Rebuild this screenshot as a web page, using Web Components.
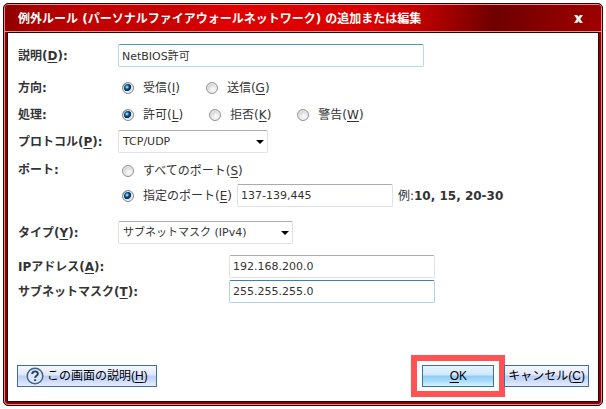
<!DOCTYPE html>
<html lang="ja">
<head>
<meta charset="utf-8">
<title>例外ルール</title>
<style>
  html, body { margin: 0; }
  body {
    box-sizing: border-box; min-height: 100vh; padding: 3px; display: flex; background: #fff; color: #333;
    font: 12px/18px "DejaVu Sans", "Noto Sans CJK JP", sans-serif;
    --field-font: 11px/15px "DejaVu Sans", "Noto Sans CJK JP", sans-serif;
  }
  dialog-window { flex: 1; }
</style>
</head>
<body>
<dialog-window heading="例外ルール (パーソナルファイアウォールネットワーク) の追加または編集">
  <text-field label="説明" key="D" value="NetBIOS許可" size="wide" tone="hover"></text-field>
  <radio-group class="first" label="方向" options="受信:I,送信:G"></radio-group>
  <radio-group label="処理" options="許可:L,拒否:K,警告:W"></radio-group>
  <select-field label="プロトコル" key="P" value="TCP/UDP" size="short"></select-field>
  <port-group label="ポート"></port-group>
  <select-field class="type" label="タイプ" key="Y" value="サブネットマスク (IPv4)"></select-field>
  <text-field class="address" label="IPアドレス" key="A" value="192.168.200.0" size="address"></text-field>
  <text-field class="mask" label="サブネットマスク" key="T" value="255.255.255.0" size="address" tone="focus"></text-field>
  <action-button slot="help" label="この画面の説明" key="H" icon></action-button>
  <action-button slot="actions" label="" key="O" tail="K" primary></action-button>
  <action-button slot="actions" label="キャンセル" key="C"></action-button>
</dialog-window>
<script>
const base = `
  * { box-sizing: border-box; }
  :host { display: block; }
  .row { display: flex; align-items: center; min-height: 23px; }
  .caption { flex: none; width: 100px; font-weight: bold; white-space: nowrap; }
  u { text-underline-offset: 2px; text-decoration-thickness: 1px; text-decoration-skip-ink: none; }
  input[type=text], select {
    appearance: none; height: 23px; margin: 0; padding: 0 3px; min-width: 0; max-width: 100%;
    border: 1px solid #dfe1e9; border-top-color: #a9abb0; border-radius: 2px;
    background: #fff; color: #333; font: var(--field-font); outline: none;
  }
  input.hover { border-color: #b5d9eb; border-top-color: #4f97c4; padding-bottom: 2px; }
  input.focus { border-color: #aed3ec; border-top-color: #3c7fb1; }
  input[type=radio] {
    appearance: none; flex: none; width: 12px; height: 12px; margin: 0; border: 1px solid #929292; border-radius: 50%;
    background: radial-gradient(circle at 60% 65%, #f4f4f4 0 20%, #c6c8ca 75%); box-shadow: inset 0 0 0 1px #f2f2f2;
  }
  input[type=radio]:checked {
    border-color: #7f8a94;
    background: radial-gradient(circle at 40% 40%, #6fd3f5 0 8%, #17659b 22%, #0a2c4c 38%, #0a2c4c 44%, #dbe3e8 52%);
  }
  .options { display: flex; gap: 26px; padding-left: 4px; }
  .option { display: flex; align-items: center; gap: 9px; white-space: nowrap; }
`;
const hot = (label, key, tail = '') => `${label}${key ? (label ? `(<u>${key}</u>)` : `<u>${key}</u>`) : ''}${tail}`;
class Base extends HTMLElement {
  a(n) { return this.getAttribute(n) || ''; }
  connectedCallback() {
    if (this.shadowRoot) return;
    this.attachShadow({ mode: 'open' }).innerHTML = `<style>${base}${this.css()}</style>${this.html()}`;
  }
  css() { return ''; }
}
customElements.define('dialog-window', class extends Base {
  css() { return `
    :host { display: flex; min-width: 0; }
    .frame { flex: 1; display: flex; min-width: 0; border: 1px solid #2a0000; border-radius: 5px; background: #2a0000; }
    section { flex: 1; min-width: 0; display: flex; flex-direction: column; border: 1px solid #f08c8c; border-radius: 4px; background: #8b0000; padding: 0 2px 2px; }
    header { display: flex; align-items: center; justify-content: space-between; height: 26px; margin: 0 -2px; padding: 1px 18px 0 13px; border-radius: 3px 3px 0 0;
      background: linear-gradient(100deg, #8a0000 0, #a80000 5%, #c00000 14%, #c80000 28%, #e00000 38%, #d80000 62%, #bc0000 70%, #6e0000 82%, #880000 91%, #a00000 100%); }
    h1 { margin: 0; padding-top: 1px; font: inherit; font-weight: bold; color: #fff; white-space: nowrap; }
    button { border: 0; padding: 0; background: none; width: 9px; height: 8px; display: block; }
    svg { display: block; }
    .rule { height: 1px; margin: 0 -2px; background: #f08c8c; }
    main { flex: 1; display: flex; flex-direction: column; border: 1px solid #2a0000; background: #fff; padding: 11px 9px 14px; }
    .fields { padding-left: 1px; }
    footer { display: flex; justify-content: space-between; margin-top: auto; padding-top: 20px; }
    .actions { display: flex; gap: 10px; }
    ::slotted(.first) { margin-top: 7px; }
    ::slotted(.type) { margin-top: 12px; }
    ::slotted(.address) { margin-top: 11px; }
    ::slotted(.mask) { margin-top: 2px; }`; }
  html() { return `<div class="frame"><section role="dialog" aria-labelledby="t">
    <header><h1 id="t">${this.a('heading')}</h1>
    <button aria-label="閉じる"><svg width="9" height="8" viewBox="0 0 10 9"><path d="M0 0H3.5L5 2L6.5 0H10L7 4.5L10 9H6.5L5 7L3.5 9H0L3 4.5Z" fill="#f4eeee"/></svg></button></header>
    <div class="rule"></div>
    <main><div class="fields"><slot></slot></div><footer><slot name="help"></slot><div class="actions"><slot name="actions"></slot></div></footer></main>
  </section></div>`; }
});
customElements.define('text-field', class extends Base {
  css() { return `.wide { width: 306px; } .address { width: 206px; } .caption.long { width: 211px; }`; }
  html() { const s = this.a('size'); return `<div class="row"><label class="caption ${s === 'address' ? 'long' : ''}" for="f">${hot(this.a('label'), this.a('key'))}:</label>
    <input id="f" type="text" class="${s} ${this.a('tone')}" value="${this.a('value')}"></div>`; }
});
customElements.define('select-field', class extends Base {
  css() { return `:host { padding-top: 2px; } .box { display: grid; align-items: center; width: 175px; } .box.short { width: 150px; }
    select { grid-area: 1/1; width: 100%; padding-left: 4px; }
    svg { grid-area: 1/1; justify-self: end; margin-right: 4px; pointer-events: none; }`; }
  html() { return `<div class="row"><label class="caption" for="f">${hot(this.a('label'), this.a('key'))}:</label>
    <div class="box ${this.a('size')}"><select id="f"><option>${this.a('value')}</option></select>
    <svg width="8" height="4" viewBox="0 0 8 4"><path d="M0 0H8L4 4Z" fill="#000"/></svg></div></div>`; }
});
const option = (text, key, on) => `<label class="option"><input type="radio" name="r" ${on ? 'checked' : ''}><span>${hot(text, key)}</span></label>`;
customElements.define('radio-group', class extends Base {
  css() { return `.row { min-height: 27px; }`; }
  html() { return `<div class="row" role="radiogroup" aria-labelledby="c"><span class="caption" id="c">${this.a('label')}:</span>
    <div class="options">${this.a('options').split(',').map((o, i) => option(...o.split(':'), i === 0)).join('')}</div></div>`; }
});
customElements.define('port-group', class extends Base {
  css() { return `:host { padding-top: 6px; } .group { display: grid; grid-template-columns: 100px 1fr; gap: 2px 0; }
    .row { padding-left: 4px; gap: 5px; white-space: nowrap; } .caption { line-height: 23px; } .port { width: 156px; }`; }
  html() { return `<div class="group" role="radiogroup" aria-labelledby="c"><span class="caption" id="c">${this.a('label')}:</span>
    <div class="row">${option('すべてのポート', 'S', false)}</div><span></span>
    <div class="row">${option('指定のポート', 'E', true)}<input class="port" type="text" aria-label="ポート番号" value="137-139,445"><span>例:<b>10, 15, 20-30</b></span></div></div>`; }
});
customElements.define('action-button', class extends Base {
  css() { return `
    :host { position: relative; }
    button { display: flex; align-items: center; justify-content: center; gap: 3px; height: 22px; padding: 0 3px; border: 1px solid #3d6f9f; border-radius: 0;
      background: linear-gradient(#f4f7ff 0, #dfe7fc 45%, #bccff6 50%, #c9d8fa 70%, #e6eefe 100%);
      color: #000; font: 12px/18px "Liberation Sans", "Noto Sans CJK JP", sans-serif; white-space: nowrap; }
    :host([icon]) button { padding: 0 8px; }
    :host([primary]) button { min-width: 72px; background: linear-gradient(#e6f4ff 0, #cfe8fc 45%, #8fcbf5 50%, #a9dcfb 75%, #d4f4ff 100%); }
    :host([primary])::after { content: ""; position: absolute; inset: -10px -11px; border: 6px solid #ff5353; }
    svg { display: block; }`; }
  html() { return `<button>${this.hasAttribute('icon') ? `<svg width="18" height="18" viewBox="0 0 18 18"><circle cx="9" cy="9" r="7.8" fill="#dbe6f8" stroke="#3f6088" stroke-width="1.4"/><path d="M6.2 7C6.2 3.6 11.9 3.6 11.9 6.8C11.9 8.8 9.1 8.6 9.1 10.8M9.1 12.2V14" fill="none" stroke="#24405f" stroke-width="1.9"/></svg>` : ''}<span>${hot(this.a('label'), this.a('key'), this.a('tail'))}</span></button>`; }
});
</script>
</body>
</html>
